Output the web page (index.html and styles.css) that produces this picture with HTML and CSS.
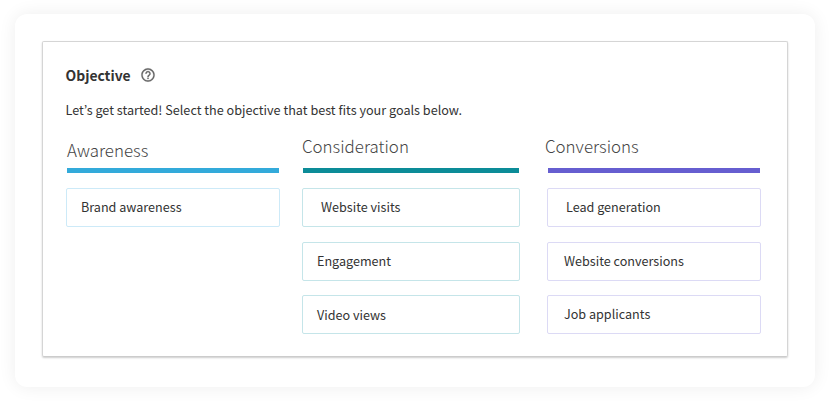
FILE: index.html
```html
<!DOCTYPE html>
<html lang="en">

<head>
  <meta charset="UTF-8" />
  <title>Objective</title>
  <link rel="stylesheet" href="styles.css">
</head>

<body>

  <div class="panel">
    <div class="card">
      <div class="card-header">
        <h2>Objective</h2>
        <svg class="help-icon" viewBox="0 0 24 24" width="16" height="16">
          <path d="M11 18h2v-2h-2v2zm1-16C6.480 2 2 6.480 2 12s4.480 10 10 10 10-4.480 10-10S17.520 2 12 2zm0 18c-4.410 0-8-3.590-8-8s3.590-8 8-8 8 3.590 8 8-3.590 8-8 8zm0-14c-2.210 0-4 1.790-4 4h2c0-1.100.9-2 2-2s2 .9 2 2c0 2-3 1.750-3 5h2c0-2.250 3-2.500 3-5 0-2.210-1.790-4-4-4z" />
        </svg>
      </div>
      <p class="intro">Let’s get started! Select the objective that best fits your goals below.</p>

      <div class="columns">
        <div class="column awareness">
          <h3>Awareness</h3>
          <div class="bar"></div>
          <div class="option">Brand awareness</div>
        </div>

        <div class="column consideration">
          <h3>Consideration</h3>
          <div class="bar"></div>
          <div class="option first">Website visits</div>
          <div class="option">Engagement</div>
          <div class="option last">Video views</div>
        </div>

        <div class="column conversions">
          <h3>Conversions</h3>
          <div class="bar"></div>
          <div class="option first">Lead generation</div>
          <div class="option">Website conversions</div>
          <div class="option">Job applicants</div>
        </div>
      </div>
    </div>
  </div>

</body>

</html>
```
FILE: styles.css
```css
* {
  box-sizing: border-box;
}

body {
  margin: 0;
  padding: 14px 15px 15px;
  background: #fff;
  font-family: "Noto Sans CJK KR", "Noto Sans", sans-serif;
  color: #333;
}

.panel {
  height: 373px;
  padding: 27px;
  border-radius: 12px;
  background: #fff;
  box-shadow: 0 0 18px rgba(0, 0, 0, 0.07);
}

.card {
  height: 316px;
  padding: 22px 26px 0 23px;
  border: 1px solid #d5d5d5;
  border-bottom-color: #ccc;
  border-radius: 2px;
  box-shadow: 0 1px 2px rgba(0, 0, 0, 0.2);
}

.card-header {
  display: flex;
  align-items: center;
  gap: 9px;
  height: 22px;
  margin-left: -0.5px;
}

h2 {
  margin: 0;
  font-size: 13.9px;
  font-weight: 700;
  line-height: 22px;
}

.help-icon {
  fill: #666;
  stroke: #666;
  stroke-width: 0.3;
}

.intro {
  margin: 14px 0 0 -0.5px;
  font-size: 12.65px;
  line-height: 20px;
}

.columns {
  display: flex;
  margin-top: 14px;
}

.column {
  width: 214px;
}

.consideration {
  width: 218px;
  margin: 0 27px 0 22px;
}

h3 {
  height: 34px;
  margin: 0;
  color: #444;
  font-size: 16.9px;
  font-weight: 300;
  line-height: 24px;
}

.awareness h3 {
  padding: 4px 0 0 1px;
}

.conversions h3 {
  margin-left: -2px;
}

.bar {
  height: 5px;
  margin: 0 1px 15px;
}

.option {
  height: 39px;
  margin-bottom: 14.5px;
  padding-left: 14px;
  border: 1px solid;
  border-radius: 2px;
  font-size: 12.6px;
  line-height: 36px;
}

.conversions .option {
  padding-left: 16px;
}

.consideration .first,
.conversions .first {
  padding-left: 18px;
}

.consideration .last {
  line-height: 38px;
}

.awareness .bar {
  background: #33aada;
}

.awareness .option {
  border-color: #cdeaf8;
}

.consideration .bar {
  background: #0c8c98;
}

.consideration .option {
  border-color: #c5e5e9;
}

.conversions .bar {
  background: #665ed0;
}

.conversions .option {
  border-color: #dcdaf5;
}
```
